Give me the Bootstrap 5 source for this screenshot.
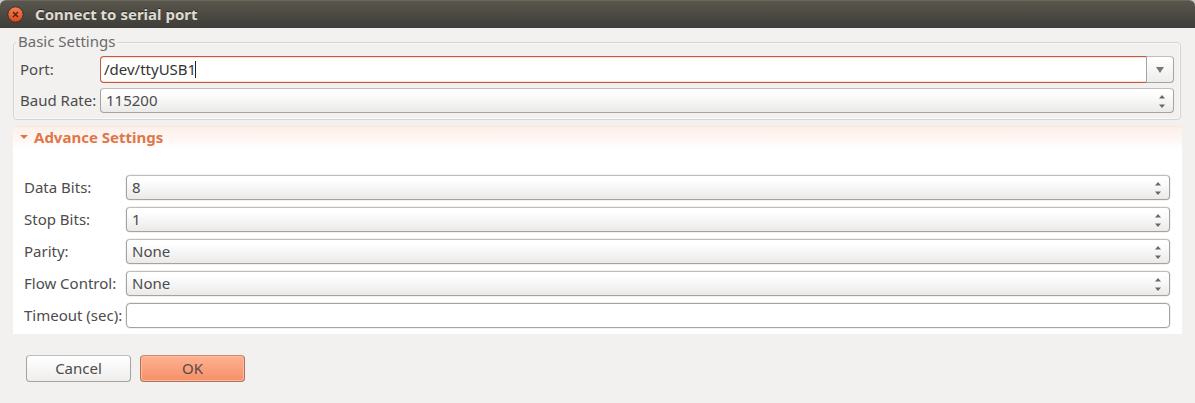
<!DOCTYPE html>
<html lang="en">
<head>
<meta charset="utf-8">
<meta name="viewport" content="width=device-width, initial-scale=1">
<title>Connect to serial port</title>
<link href="https://cdn.jsdelivr.net/npm/bootstrap@5.3.0/dist/css/bootstrap.min.css" rel="stylesheet">
<style>
  body { background: #f2f1f0; color: #4c4c4c; font-family: "Noto Sans", sans-serif; font-size: 15px; line-height: 20px; }
  .dialog-title { height: 28px; padding: 0 7px; background: linear-gradient(#59564c, #3e3d39); border-top: 1px solid #6b695f; border-radius: 6px 6px 0 0; }
  .title-strip { background: #c9c9c7; }
  .dialog-title h1 { margin-left: 11px; padding-bottom: 2px; font-size: 15px; line-height: 20px; color: #dfdbd2; text-shadow: 0 -1px #2b2a27; }
  .close-btn { width: 17px; height: 17px; }
  .dialog-body { padding: 14px 14px 20px 13px; }
  .group-box { border: 1px solid #d6d4d2; border-radius: 4px; box-shadow: inset 0 0 0 1px #faf9f9; padding: 13px 6px 6px 6px; position: relative; }
  .group-box legend { position: absolute; top: -12px; left: 2px; width: auto; padding: 0 2px; font-size: 15px; line-height: 20px; color: #6b6b6b; background: #f2f1f0; }
  .field-row label { flex: none; white-space: nowrap; padding-bottom: 2px; }
  .group-box .field-row label { width: 80px; }
  .adv-panel .field-row label { width: 102px; }
  .gtk-field { height: 25px; padding: 0 5px 2px; border: 1px solid #a5a29f; border-top-color: #c0bdba; border-radius: 4px; font-size: 15px; line-height: 20px; color: #4c4c4c; }
  select.gtk-field { background-color: #fff; background-repeat: no-repeat;
    background-image: url("data:image/svg+xml,%3Csvg xmlns='http://www.w3.org/2000/svg' width='6' height='13'%3E%3Cpath d='M0 3.5 3 0l3 3.5zM0 9.5h6L3 13z' fill='%23666'/%3E%3C/svg%3E"), linear-gradient(#fff 15%, #ebeae9);
    background-position: right 8px bottom 4px, 0 0; background-size: 6px 13px, 100% 100%; }
  input.gtk-field { background-color: #fff; border-color: #a5a29f; }
  .adv-panel .gtk-field { box-shadow: 0 0 0 1px #f2f1f0; }
  .combo-row { margin-bottom: 5px; }
  .combo-entry { height: 27px; }
  .combo-entry .port-input { height: 27px; padding-left: 3px; border-color: #c2593a; border-right: 0; border-radius: 4px 0 0 4px; color: #333;
    box-shadow: inset 0 1px #fbe3da, inset 0 -1px #fbe3da; }
  .caret-bar { position: absolute; top: 5px; left: 96px; width: 1px; height: 17px; background: #222; z-index: 6; }
  .combo-btn { width: 28px; height: 27px; border: 1px solid #a5a29f; border-top-color: #c0bdba; border-radius: 0 4px 4px 0; background: linear-gradient(#fff, #ededec); }
  .adv-panel { margin: 6px -1px 0 0; padding: 1px 12px 6px 11px; border-top: 1px solid #fbe3da; border-radius: 4px 4px 0 0; background: linear-gradient(#fdefe9, #fff 23px) #fff; }
  .adv-toggle { margin-left: -4px; gap: 6px; color: #df764a; font-weight: 700; font-size: 15px; line-height: 18px; }
  .adv-fields { padding-top: 29px; row-gap: 7px; }
  .dialog-actions { padding: 21px 13px 0; gap: 9px; }
  .dialog-actions .btn { width: 105px; height: 27px; font-size: 15px; line-height: 20px; border: 1px solid #a5a29f; border-top-color: #c0bdba; border-radius: 4px; color: #4c4c4c; background: linear-gradient(#fff, #efeeed); }
  .dialog-actions .btn span { display: block; padding-bottom: 2px; }
  .dialog-actions .btn-ok { border-color: #a9735e; border-top-color: #c98b72; background: linear-gradient(#ffb191, #f49069); box-shadow: inset 0 0 0 1px #ffb99c; color: #5a4a44; }
</style>
</head>
<body>
<header class="title-strip">
  <div class="dialog-title d-flex align-items-center">
    <button type="button" class="btn p-0 border-0 d-flex close-btn" aria-label="Close">
      <svg width="17" height="17" viewBox="0 0 17 17" aria-hidden="true">
        <defs><linearGradient id="closeFill" x1="0" y1="0" x2="0" y2="1"><stop offset="0" stop-color="#f58058"/><stop offset="1" stop-color="#dd4814"/></linearGradient></defs>
        <circle cx="8.500" cy="8.500" r="7.700" fill="url(#closeFill)" stroke="#34312c"/>
        <path d="M6 6l5 5M11 6l-5 5" stroke="#42201a" stroke-width="1.200"/>
      </svg>
    </button>
    <h1 class="mb-0 fw-bold">Connect to serial port</h1>
  </div>
</header>
<main class="dialog-body">
  <form>
    <fieldset class="group-box">
      <legend class="float-none mb-0">Basic Settings</legend>
      <div class="field-row combo-row d-flex align-items-center">
        <label for="port">Port:</label>
        <div class="input-group flex-nowrap flex-grow-1 position-relative combo-entry">
          <input id="port" type="text" class="form-control gtk-field port-input" value="/dev/ttyUSB1">
          <span class="caret-bar"></span>
          <button type="button" class="btn p-0 d-flex align-items-center justify-content-center combo-btn" aria-label="Show ports">
            <svg width="8" height="6" viewBox="0 0 8 6" aria-hidden="true"><path d="M0 0h8L4 6z" fill="#777"/></svg>
          </button>
        </div>
      </div>
      <div class="field-row d-flex align-items-center">
        <label for="baud">Baud Rate:</label>
        <select id="baud" class="form-select gtk-field"><option>115200</option></select>
      </div>
    </fieldset>

    <section class="adv-panel">
      <button type="button" class="btn p-0 border-0 d-flex align-items-center adv-toggle" data-bs-toggle="collapse" data-bs-target="#advanced" aria-expanded="true" aria-controls="advanced">
        <svg width="8" height="4" viewBox="0 0 8 4" aria-hidden="true"><path d="M0 0h8L4 4z" fill="#df764a"/></svg>
        <span>Advance Settings</span>
      </button>
      <div id="advanced" class="collapse show">
        <div class="adv-fields d-grid">
          <div class="field-row d-flex align-items-center"><label for="dataBits">Data Bits:</label><select id="dataBits" class="form-select gtk-field"><option>8</option></select></div>
          <div class="field-row d-flex align-items-center"><label for="stopBits">Stop Bits:</label><select id="stopBits" class="form-select gtk-field"><option>1</option></select></div>
          <div class="field-row d-flex align-items-center"><label for="parity">Parity:</label><select id="parity" class="form-select gtk-field"><option>None</option></select></div>
          <div class="field-row d-flex align-items-center"><label for="flow">Flow Control:</label><select id="flow" class="form-select gtk-field"><option>None</option></select></div>
          <div class="field-row d-flex align-items-center"><label for="timeout">Timeout (sec):</label><input id="timeout" type="text" class="form-control gtk-field"></div>
        </div>
      </div>
    </section>

    <div class="dialog-actions d-flex">
      <button type="button" class="btn p-0"><span>Cancel</span></button>
      <button type="submit" class="btn p-0 btn-ok"><span>OK</span></button>
    </div>
  </form>
</main>
<script src="https://cdn.jsdelivr.net/npm/bootstrap@5.3.0/dist/js/bootstrap.bundle.min.js"></script>
</body>
</html>
